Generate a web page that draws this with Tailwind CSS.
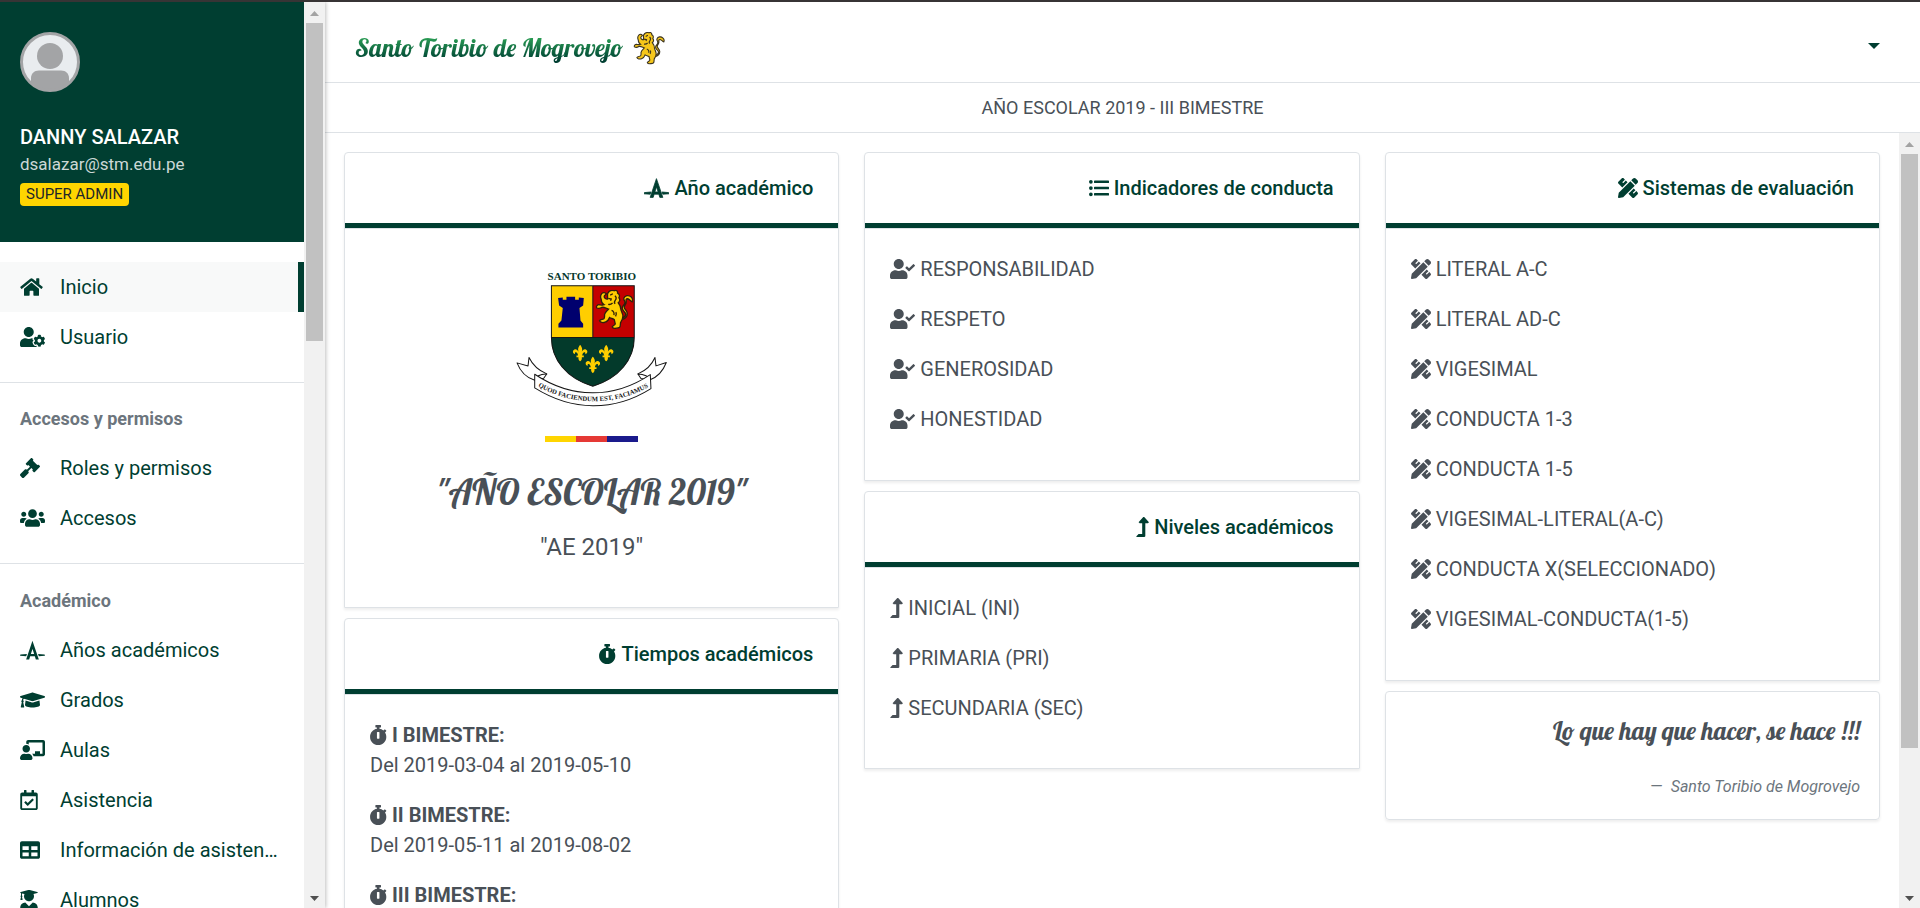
<!DOCTYPE html>
<html lang="es">
<head>
<meta charset="utf-8">
<title>Santo Toribio de Mogrovejo</title>
<script src="https://cdn.jsdelivr.net/npm/@tailwindcss/browser@4"></script>
</head>
<body class="font-['Roboto',sans-serif] text-[20px] leading-[30px] text-[#495057] bg-white">

<!-- Icon library -->
<svg class="hidden" aria-hidden="true">
  <symbol id="home" viewBox="0 0 576 512"><path d="M280.37 148.26L96 300.11V464a16 16 0 0 0 16 16l112.06-.29a16 16 0 0 0 15.92-16V368a16 16 0 0 1 16-16h64a16 16 0 0 1 16 16v95.64a16 16 0 0 0 16 16.05L464 480a16 16 0 0 0 16-16V300L295.67 148.26a12.19 12.19 0 0 0-15.3 0zM571.6 251.47L488 182.56V44.05a12 12 0 0 0-12-12h-56a12 12 0 0 0-12 12v72.61L318.47 43a48 48 0 0 0-61 0L4.34 251.47a12 12 0 0 0-1.6 16.9l25.5 31A12 12 0 0 0 45.15 301l235.22-193.74a12.19 12.19 0 0 1 15.3 0L530.9 301a12 12 0 0 0 16.9-1.6l25.5-31a12 12 0 0 0-1.7-16.93z"/></symbol>
  <symbol id="user-cog" viewBox="0 0 640 512"><path d="M610.5 373.3c2.6-14.1 2.6-28.5 0-42.6l25.8-14.9c3-1.7 4.3-5.2 3.3-8.5-6.7-21.6-18.2-41.2-33.2-57.4-2.3-2.5-6-3.1-9-1.4l-25.8 14.9c-10.9-9.3-23.4-16.5-36.9-21.3v-29.8c0-3.4-2.4-6.4-5.7-7.1-22.3-5-45-4.8-66.2 0-3.3.7-5.7 3.7-5.7 7.1v29.8c-13.5 4.8-26 12-36.9 21.3l-25.8-14.9c-2.9-1.7-6.7-1.1-9 1.4-15 16.2-26.5 35.8-33.2 57.4-1 3.3.4 6.8 3.3 8.5l25.8 14.9c-2.6 14.1-2.6 28.5 0 42.6l-25.8 14.9c-3 1.7-4.3 5.2-3.3 8.5 6.7 21.6 18.2 41.1 33.2 57.4 2.3 2.5 6 3.1 9 1.4l25.8-14.9c10.9 9.3 23.4 16.5 36.9 21.3v29.8c0 3.4 2.4 6.4 5.7 7.1 22.3 5 45 4.8 66.2 0 3.3-.7 5.7-3.7 5.7-7.1v-29.8c13.5-4.8 26-12 36.9-21.3l25.8 14.9c2.9 1.7 6.7 1.1 9-1.4 15-16.2 26.5-35.8 33.2-57.4 1-3.3-.4-6.8-3.3-8.5l-25.8-14.9zM496 400.5c-26.8 0-48.5-21.8-48.5-48.5s21.8-48.5 48.5-48.5 48.5 21.8 48.5 48.5-21.7 48.5-48.5 48.5zM224 256c70.7 0 128-57.3 128-128S294.7 0 224 0 96 57.3 96 128s57.3 128 128 128zm201.2 226.5c-2.3-1.2-4.6-2.6-6.8-3.9l-7.9 4.6c-6 3.4-12.8 5.3-19.6 5.3-10.9 0-21.4-4.6-28.9-12.6-18.3-19.8-32.3-43.9-40.2-69.6-5.5-17.7 1.9-36.4 17.9-45.7l7.9-4.6c-.1-2.6-.1-5.2 0-7.8l-7.9-4.6c-16-9.2-23.4-28-17.9-45.7.9-2.9 2.2-5.8 3.2-8.7-3.8-.3-7.5-1.2-11.4-1.2h-16.7c-22.2 10.2-46.9 16-72.9 16s-50.6-5.8-72.9-16h-16.7C60.2 288 0 348.2 0 422.4V464c0 26.5 21.5 48 48 48h352c10.1 0 19.5-3.2 27.2-8.5-1.2-3.8-2-7.7-2-11.8v-9.2z"/></symbol>
  <symbol id="gavel" viewBox="0 0 512 512"><path d="M504.971 199.362l-22.627-22.627c-9.373-9.373-24.569-9.373-33.941 0l-5.657 5.657L329.608 69.255l5.657-5.657c9.373-9.373 9.373-24.569 0-33.941L312.638 7.029c-9.373-9.373-24.569-9.373-33.941 0L154.246 131.48c-9.373 9.373-9.373 24.569 0 33.941l22.627 22.627c9.373 9.373 24.569 9.373 33.941 0l5.657-5.657 39.598 39.598-81.04 81.04-5.657-5.657c-12.497-12.497-32.758-12.497-45.255 0L9.373 412.118c-12.497 12.497-12.497 32.758 0 45.255l45.255 45.255c12.497 12.497 32.758 12.497 45.255 0l114.745-114.745c12.497-12.497 12.497-32.758 0-45.255l-5.657-5.657 81.04-81.04 39.598 39.598-5.657 5.657c-9.373 9.373-9.373 24.569 0 33.941l22.627 22.627c9.373 9.373 24.569 9.373 33.941 0l124.451-124.451c9.372-9.372 9.372-24.568 0-33.941z"/></symbol>
  <symbol id="users" viewBox="0 0 640 512"><path d="M96 224c35.3 0 64-28.7 64-64s-28.7-64-64-64-64 28.7-64 64 28.7 64 64 64zm448 0c35.3 0 64-28.7 64-64s-28.7-64-64-64-64 28.7-64 64 28.7 64 64 64zm32 32h-64c-17.6 0-33.5 7.1-45.1 18.6 40.3 22.1 68.9 62 75.1 109.4h66c17.7 0 32-14.3 32-32v-32c0-35.3-28.7-64-64-64zm-256 0c61.9 0 112-50.1 112-112S381.9 32 320 32 208 82.1 208 144s50.1 112 112 112zm76.8 32h-8.3c-20.8 10-43.9 16-68.5 16s-47.6-6-68.5-16h-8.3C179.6 288 128 339.6 128 403.2V432c0 26.5 21.5 48 48 48h288c26.5 0 48-21.5 48-48v-28.8c0-63.6-51.6-115.2-115.2-115.2zm-223.7-13.4C161.5 263.1 145.6 256 128 256H64c-35.3 0-64 28.7-64 64v32c0 17.7 14.3 32 32 32h65.9c6.3-47.4 34.9-87.3 75.2-109.4z"/></symbol>
  <symbol id="year" viewBox="0 0 640 512"><path d="M318.4 16l-161 480h77.5l25.4-81.4h119.5L405 496h77.5L318.4 16zm-40.3 341.9l41.2-130.4h1.5l40.9 130.4h-83.6zM640 405l-10-31.4L462.1 358l19.4 56.5L640 405zm-462.1-47L10 373.7 0 405l158.5 9.4 19.4-56.4z"/></symbol>
  <symbol id="cap" viewBox="0 0 640 512"><path d="M622.34 153.2L343.4 67.5c-15.2-4.67-31.6-4.67-46.79 0L17.66 153.2c-23.54 7.23-23.54 38.36 0 45.59l48.63 14.94c-10.67 13.19-17.23 29.28-17.88 46.9C38.78 266.15 32 276.11 32 288c0 10.78 5.68 19.85 13.86 25.65L20.33 428.53C18.11 438.52 25.71 448 35.94 448h56.11c10.24 0 17.84-9.48 15.62-19.47L82.14 313.65C90.32 307.85 96 298.78 96 288c0-11.57-6.47-21.25-15.66-26.87.76-15.02 8.44-28.3 20.69-36.72L296.6 284.5c9.06 2.78 26.44 6.25 46.79 0l278.95-85.7c23.55-7.24 23.55-38.36 0-45.6zM352.79 315.09c-28.53 8.76-52.84 3.92-65.59 0l-145.02-44.55L128 384c0 35.35 85.96 64 192 64s192-28.65 192-64l-14.18-113.47-145.03 44.56z"/></symbol>
  <symbol id="teacher" viewBox="0 0 640 512"><path d="M208 352c-2.39 0-4.78.35-7.06 1.09C187.98 357.3 174.35 360 160 360c-14.35 0-27.98-2.7-40.95-6.91-2.28-.74-4.66-1.09-7.05-1.09C49.94 352-.33 402.48 0 464.62.14 490.88 21.73 512 48 512h224c26.27 0 47.86-21.12 48-47.38.33-62.14-49.94-112.62-112-112.62zm-48-32c53.02 0 96-42.98 96-96s-42.98-96-96-96-96 42.98-96 96 42.98 96 96 96zM592 0H208c-26.47 0-48 22.25-48 49.59V96c23.42 0 45.1 6.78 64 17.8V64h352v288h-64v-64H384v64h-76.24c19.1 16.69 33.12 38.73 39.69 64H592c26.47 0 48-22.25 48-49.59V49.59C640 22.25 618.47 0 592 0z"/></symbol>
  <symbol id="calendar" viewBox="0 0 448 512"><path d="M400 64h-48V12c0-6.627-5.373-12-12-12h-40c-6.627 0-12 5.373-12 12v52H160V12c0-6.627-5.373-12-12-12h-40c-6.627 0-12 5.373-12 12v52H48C21.49 64 0 85.49 0 112v352c0 26.51 21.49 48 48 48h352c26.51 0 48-21.49 48-48V112c0-26.51-21.49-48-48-48zm-6 400H54a6 6 0 0 1-6-6V160h352v298a6 6 0 0 1-6 6zm-52.849-200.65L198.842 404.519c-4.705 4.667-12.303 4.637-16.971-.068l-75.091-75.699c-4.667-4.705-4.637-12.303.068-16.971l22.719-22.536c4.705-4.667 12.303-4.637 16.97.069l44.104 44.461 111.072-110.181c4.705-4.667 12.303-4.637 16.971.068l22.536 22.718c4.667 4.705 4.636 12.303-.069 16.97z"/></symbol>
  <symbol id="grid" viewBox="0 0 512 512"><path d="M464 32H48C21.49 32 0 53.49 0 80v352c0 26.51 21.49 48 48 48h416c26.51 0 48-21.49 48-48V80c0-26.51-21.49-48-48-48zM224 416H64v-96h160v96zm0-160H64v-96h160v96zm224 160H288v-96h160v96zm0-160H288v-96h160v96z"/></symbol>
  <symbol id="student" viewBox="0 0 448 512"><path d="M319.4 320.6L224 416l-95.4-95.4C57.1 323.7 0 382.2 0 454.4v9.6c0 26.5 21.5 48 48 48h352c26.5 0 48-21.5 48-48v-9.6c0-72.2-57.1-130.7-128.6-133.8zM13.6 79.8l6.4 1.5v58.4c-7 4.2-12 11.5-12 20.3 0 8.4 4.6 15.4 11.1 19.7L3.5 242c-1.7 6.9 2.1 14 7.6 14h41.8c5.5 0 9.3-7.1 7.6-14l-15.6-62.3C51.4 175.4 56 168.4 56 160c0-8.8-5-16.1-12-20.3V87.1l66 15.9c-8.6 17.2-14 36.4-14 57 0 70.7 57.3 128 128 128s128-57.3 128-128c0-20.6-5.3-39.8-14-57l96.3-23.2c18.2-4.4 18.2-27.1 0-31.5l-190.4-46c-13-3.1-26.7-3.1-39.7 0L13.6 48.2c-18.1 4.4-18.1 27.2 0 31.6z"/></symbol>
  <symbol id="list" viewBox="0 0 512 512"><path d="M48 48a48 48 0 1 0 48 48 48 48 0 0 0-48-48zm0 160a48 48 0 1 0 48 48 48 48 0 0 0-48-48zm0 160a48 48 0 1 0 48 48 48 48 0 0 0-48-48zm448 16H144a16 16 0 0 0-16 16v32a16 16 0 0 0 16 16h352a16 16 0 0 0 16-16v-32a16 16 0 0 0-16-16zm0-320H144a16 16 0 0 0-16 16v32a16 16 0 0 0 16 16h352a16 16 0 0 0 16-16V80a16 16 0 0 0-16-16zm0 160H144a16 16 0 0 0-16 16v32a16 16 0 0 0 16 16h352a16 16 0 0 0 16-16v-32a16 16 0 0 0-16-16z"/></symbol>
  <symbol id="stopwatch" viewBox="16 0 432 512"><path d="M432 304c0 114.9-93.1 208-208 208S16 418.9 16 304c0-104 76.3-190.2 176-205.5V64h-28c-6.6 0-12-5.4-12-12V12c0-6.6 5.4-12 12-12h120c6.6 0 12 5.4 12 12v40c0 6.6-5.4 12-12 12h-28v34.5c37.5 5.8 71.7 21.6 99.7 44.6l27.5-27.5c4.7-4.7 12.3-4.7 17 0l28.3 28.3c4.7 4.7 4.7 12.3 0 17l-29.4 29.4-.6.6C419.7 223.3 432 262.2 432 304zm-176 36V188.5c0-6.6-5.4-12-12-12h-40c-6.6 0-12 5.4-12 12V340c0 6.6 5.4 12 12 12h40c6.6 0 12-5.4 12-12z"/></symbol>
  <symbol id="user-check" viewBox="0 0 640 512"><path d="M224 256c70.7 0 128-57.3 128-128S294.7 0 224 0 96 57.3 96 128s57.3 128 128 128zm89.6 32h-16.7c-22.2 10.2-46.9 16-72.9 16s-50.6-5.8-72.9-16h-16.7C60.2 288 0 348.2 0 422.4V464c0 26.5 21.5 48 48 48h352c26.5 0 48-21.5 48-48v-41.6c0-74.2-60.2-134.4-134.4-134.4zm323-128.4l-27.8-28.1c-4.6-4.7-12.1-4.7-16.8-.1l-104.8 104-45.5-45.8c-4.6-4.7-12.1-4.7-16.8-.1l-28.1 27.9c-4.7 4.6-4.7 12.1-.1 16.8l81.7 82.3c4.6 4.7 12.1 4.7 16.8.1l141.3-140.2c4.6-4.7 4.7-12.2.1-16.8z"/></symbol>
  <symbol id="level-up" viewBox="0 0 320 512"><path d="M313.553 119.669L209.587 7.666c-9.485-10.214-25.676-10.229-35.174 0L70.438 119.669C56.232 134.969 67.062 160 88.025 160H152v272H68.024a11.996 11.996 0 0 0-8.485 3.515l-56 56C-4.021 499.074 1.333 512 12.024 512H208c13.255 0 24-10.745 24-24V160h63.966c20.878 0 31.851-24.969 17.587-40.331z"/></symbol>
  <symbol id="ruler" viewBox="0 0 512 512"><path d="M109.46 244.04l134.58-134.56-44.12-44.12-61.68 61.68a7.919 7.919 0 0 1-11.21 0l-11.21-11.21c-3.1-3.1-3.1-8.12 0-11.21l61.68-61.68-33.64-33.65C131.47-3.1 111.39-3.1 99 9.29L9.29 99c-12.38 12.39-12.39 32.47 0 44.86l100.17 100.18zm388.47-116.8c18.76-18.76 18.75-49.17 0-67.93l-45.25-45.25c-18.76-18.76-49.18-18.76-67.95 0l-46.02 46.01 113.2 113.2 46.02-46.03zM316.08 82.71l-297 296.96L.32 487.11c-2.53 14.49 10.09 27.11 24.59 24.56l107.45-18.84L429.28 195.9 316.08 82.71zm186.63 285.43l-33.64-33.64-61.68 61.68c-3.1 3.1-8.12 3.1-11.21 0l-11.21-11.21c-3.09-3.1-3.09-8.12 0-11.21l61.68-61.68-44.14-44.14L267.93 402.5l100.21 100.2c12.39 12.39 32.47 12.39 44.86 0l89.71-89.7c12.39-12.39 12.39-32.47 0-44.86z"/></symbol>
  <symbol id="lion" viewBox="0 0 112 120">
    <path d="M76 86c10-3 16-8 14-15-2-6-10-8-10-16 0-8 8-9 8-17 0-6-5-7-3-13 3-8 14-10 22-3 4 4 5 9 3 14-6-2-8-8-14-9-5 0-5 4-4 8 1 8-6 12-6 18 0 5 8 8 9 17 1 11-8 18-18 20z" stroke-width="4"/>
    <path d="M36 12c4-9 13-12 20-9 6-4 11 2 10 7 6 3 7 9 4 14 5 6 2 12-2 15 5 6 8 12 8 20 1 7 6 12 6 20 0 9-4 14-7 19l-1 10c0 6-6 7-11 7-6 1-12 0-13-4 3-5 8-5 9-9l-3-13c-5-3-10-3-14-6-3 8-6 12-13 14-7 3-15 1-17-4 3-5 9-3 13-6 3-3 2-8 2-13 2-7 8-11 12-16-8-2-14-8-20-5-5 3-11 4-16 1-2-6 4-10 9-9 6 1 10 2 14 0-6-3-9-9-9-16-3-6-2-13 2-18 4-4 10-3 13 1-1 4-5 4-6 8 0 5 6 9 10 8z" stroke-width="4"/>
    <path d="M44 16l8-4M38 26l9 2-2 5M58 18c5 4 4 10 1 14s-4 7 0 10M38 44c6 1 10-1 13-4M48 62c6 2 9 8 7 14M60 80c3-5 3-9 1-13" fill="none" stroke-width="4"/>
  </symbol>
  <symbol id="lis" viewBox="0 0 46 50"><path d="M23 0c7 9 8 14 3 26 3-10 9-14 14-12 7 3 6 13-2 14 2-4-1-7-4-5-4 2-4 6-5 9h5v5h-6c0 5 1 8-5 13-6-5-5-8-5-13h-6v-5h5c-1-3-1-7-5-9-3-2-6 1-4 5-8-1-9-11-2-14 5-2 11 2 14 12C15 14 16 9 23 0z"/></symbol>
</svg>

<div class="flex h-screen flex-col overflow-hidden border-t-2 border-[#373435]">
<div class="flex min-h-0 flex-1">

  <!-- Sidebar -->
  <aside class="z-10 flex w-[325px] shrink-0 bg-white shadow-[1px_0_4px_rgba(0,0,0,0.25)]">
    <div class="min-w-0 flex-1 overflow-hidden text-[#003e31]">
      <div class="h-[240px] bg-[#003e31] px-5 pt-[30px]">
        <svg class="size-[60px]" viewBox="0 0 60 60" role="img" aria-label="Avatar">
          <circle cx="30" cy="30" r="28.500" fill="#e9ecef"/>
          <circle cx="30" cy="24" r="13" fill="#a3a4a6"/>
          <path d="M11 52V46c0-4 3-7.500 8-7.500h22c5 0 8 3.500 8 7.500v6a29 29 0 0 1-38 0z" fill="#a3a4a6"/>
          <circle cx="30" cy="30" r="28.500" fill="none" stroke="#a3a4a6" stroke-width="3"/>
        </svg>
        <div class="mt-[30px] font-medium text-white">DANNY SALAZAR</div>
        <div class="text-[17px] leading-[25px] text-[#ccd8d6]">dsalazar@stm.edu.pe</div>
        <span class="mt-[6px] inline-block rounded-[4px] bg-[#ffd500] px-[6px] align-top text-[15px] leading-[23px] text-[#212529]">SUPER ADMIN</span>
      </div>
      <nav>
        <ul class="border-b border-[#dee2e6] py-5">
          <li><a href="#" class="flex h-[50px] items-center border-r-6 border-[#003e31] bg-[#f8f9f9] pl-5"><span class="w-10"><svg class="h-5 w-[23px] fill-current"><use href="#home"/></svg></span>Inicio</a></li>
          <li><a href="#" class="flex h-[50px] items-center pl-5"><span class="w-10"><svg class="h-5 w-[25px] fill-current"><use href="#user-cog"/></svg></span>Usuario</a></li>
        </ul>
        <h2 class="px-5 pt-[21px] pb-[9px] text-[18px] font-bold text-[#6c757d]">Accesos y permisos</h2>
        <ul class="border-b border-[#dee2e6] pb-5">
          <li><a href="#" class="flex h-[50px] items-center pl-5"><span class="w-10"><svg class="size-5 fill-current"><use href="#gavel"/></svg></span>Roles y permisos</a></li>
          <li><a href="#" class="flex h-[50px] items-center pl-5"><span class="w-10"><svg class="h-5 w-[25px] fill-current"><use href="#users"/></svg></span>Accesos</a></li>
        </ul>
        <h2 class="px-5 pt-[22px] pb-[9px] text-[18px] font-bold text-[#6c757d]">Académico</h2>
        <ul>
          <li><a href="#" class="flex h-[50px] items-center pl-5"><span class="w-10"><svg class="h-5 w-[25px] fill-current"><use href="#year"/></svg></span>Años académicos</a></li>
          <li><a href="#" class="flex h-[50px] items-center pl-5"><span class="w-10"><svg class="h-5 w-[25px] fill-current"><use href="#cap"/></svg></span>Grados</a></li>
          <li><a href="#" class="flex h-[50px] items-center pl-5"><span class="w-10"><svg class="h-5 w-[25px] fill-current"><use href="#teacher"/></svg></span>Aulas</a></li>
          <li><a href="#" class="flex h-[50px] items-center pl-5"><span class="w-10"><svg class="h-5 w-[18px] fill-current"><use href="#calendar"/></svg></span>Asistencia</a></li>
          <li><a href="#" class="flex h-[50px] items-center pl-5"><span class="w-10"><svg class="size-5 fill-current"><use href="#grid"/></svg></span>Información de asisten…</a></li>
          <li><a href="#" class="flex h-[50px] items-center pl-5"><span class="w-10"><svg class="h-5 w-[18px] fill-current"><use href="#student"/></svg></span>Alumnos</a></li>
        </ul>
      </nav>
    </div>
    <!-- Scrollbar -->
    <div class="flex w-[21px] flex-col items-center bg-[#f1f1f1]" aria-hidden="true">
      <svg class="h-[21px] w-[21px] shrink-0" viewBox="0 0 21 21"><path d="M6 14l4.500-5 4.500 5z" fill="#a3a3a3"/></svg>
      <div class="h-[318px] w-[17px] bg-[#c1c1c1]"></div>
      <svg class="mt-auto h-[21px] w-[21px] shrink-0" viewBox="0 0 21 21"><path d="M6 9l4.500 5 4.500-5z" fill="#505050"/></svg>
    </div>
  </aside>

  <!-- Main -->
  <div class="flex min-w-0 flex-1 flex-col">
    <header class="flex h-[81px] shrink-0 items-center justify-between border-b border-[#dee2e6] pt-3 pr-[40px] pl-[30px]">
      <a href="#" class="flex items-center gap-[10px]">
        <span class="bg-linear-to-b from-[#34b35a] from-10% to-[#003e31] to-85% bg-clip-text font-['Lobster','Liberation_Serif',serif] text-[25px] leading-[38px] text-transparent">Santo Toribio de Mogrovejo</span>
        <svg class="h-[33px] w-8 fill-[#f6c71b] stroke-[#3a3320]"><use href="#lion"/></svg>
      </a>
      <button type="button" aria-label="Menú de usuario" class="pb-1"><svg class="h-[6px] w-3 fill-[#003e31]" viewBox="0 0 12 6"><path d="M0 0h12L6 6z"/></svg></button>
    </header>
    <div class="flex h-[50px] shrink-0 items-center justify-center border-b border-[#dee2e6] text-[18px]">AÑO ESCOLAR 2019 - III BIMESTRE</div>

    <div class="flex min-h-0 flex-1">
      <main class="grid min-w-0 flex-1 grid-cols-3 items-start gap-[25px] overflow-hidden px-[19px] pt-[19px]">

        <div class="flex flex-col gap-[10px]">
          <section class="rounded-t-[4px] border border-[#dee2e6] shadow-[0_2px_3px_rgba(0,0,0,0.07)]">
            <h3 class="flex h-[75px] items-center justify-end gap-[5px] border-b-5 border-[#003e31] px-[25px] font-medium text-[#003e31]"><svg class="h-5 w-[25px] fill-current stroke-current [stroke-width:20]"><use href="#year"/></svg>Año académico</h3>
            <div class="flex flex-col items-center border-t border-[#dee2e6] pt-[41px] pb-[41px]">
              <svg class="h-[137px] w-[151px]" viewBox="80 60 452 410" role="img" aria-label="Escudo Santo Toribio">
                <text x="307" y="90" text-anchor="middle" font-family="Liberation Serif, serif" font-weight="bold" font-size="33" fill="#06382c">SANTO TORIBIO</text>
                <path d="M186 107h124v155H186z" fill="#ffce00"/>
                <path d="M310 107h124v155H310z" fill="#c40000"/>
                <path d="M186 262h248c1 65-45 122-124 146-80-24-125-81-124-146z" fill="#033a2b"/>
                <path d="M186 107h248v155c0 65-45 122-124 146-80-24-124-81-124-146zM310 107v155M186 262h248" fill="none" stroke="#161616" stroke-width="3"/>
                <path d="M206 144l14-2v7h11v-9h26v9h11v-7l15 2-2 22-11 8 3 37 8 10v11h-74v-11l9-10 4-37-11-8z" fill="#00006e"/>
                <use href="#lion" x="318" y="119" width="112" height="120" fill="#ffce00" stroke="#30200a"/>
                <use href="#lis" x="249" y="284" width="46" height="50" fill="#ffce00"/>
                <use href="#lis" x="327" y="284" width="46" height="50" fill="#ffce00"/>
                <use href="#lis" x="287" y="319" width="46" height="50" fill="#ffce00"/>
                <g fill="#fff" stroke="#161616" stroke-width="3" stroke-linejoin="round">
                  <path d="M172 371c-24-10-42-26-53-49l-3 25-33-9c9 23 26 44 53 52z"/>
                  <path d="M445 371c24-10 41-26 51-49l3 25 31-10c-9 23-26 44-50 52z"/>
                  <path d="M136 390c2-10 16-20 36-19l-9 13z"/>
                  <path d="M482 389c-4-9-18-18-37-18l9 14z"/>
                  <path d="M136 372c110 73 234 75 346 1l2 42c-112 70-236 68-348-2z"/>
                </g>
                <path id="motto" d="M142 406c102 62 236 62 338 2" fill="none"/>
                <text font-family="Liberation Serif, serif" font-weight="bold" font-size="20" fill="#161616"><textPath href="#motto" startOffset="50%" text-anchor="middle">QUOD FACIENDUM EST, FACIAMUS</textPath></text>
              </svg>
              <div class="mt-[29px] flex h-[6px] w-[93px]" aria-hidden="true"><span class="flex-1 bg-[#ffd500]"></span><span class="flex-1 bg-[#e53935]"></span><span class="flex-1 bg-[#1a1a8c]"></span></div>
              <h1 class="mt-5 font-['Lobster','Liberation_Serif',serif] text-[35px] leading-[60px]">"AÑO ESCOLAR 2019"</h1>
              <p class="mt-[6px] text-[24px] leading-[38px]">"AE 2019"</p>
            </div>
          </section>

          <section class="rounded-t-[4px] border border-[#dee2e6] shadow-[0_2px_3px_rgba(0,0,0,0.07)]">
            <h3 class="flex h-[75px] items-center justify-end gap-[5px] border-b-5 border-[#003e31] px-[25px] font-medium text-[#003e31]"><svg class="h-5 w-[17px] fill-current"><use href="#stopwatch"/></svg>Tiempos académicos</h3>
            <ul class="flex flex-col gap-5 border-t border-[#dee2e6] px-[25px] pt-[25px] pb-[46px]">
              <li><strong class="flex items-center gap-[5px]"><svg class="h-5 w-[17px] fill-current"><use href="#stopwatch"/></svg>I BIMESTRE:</strong>Del 2019-03-04 al 2019-05-10</li>
              <li><strong class="flex items-center gap-[5px]"><svg class="h-5 w-[17px] fill-current"><use href="#stopwatch"/></svg>II BIMESTRE:</strong>Del 2019-05-11 al 2019-08-02</li>
              <li><strong class="flex items-center gap-[5px]"><svg class="h-5 w-[17px] fill-current"><use href="#stopwatch"/></svg>III BIMESTRE:</strong></li>
            </ul>
          </section>
        </div>

        <div class="flex flex-col gap-[10px]">
          <section class="rounded-t-[4px] border border-[#dee2e6] shadow-[0_2px_3px_rgba(0,0,0,0.07)]">
            <h3 class="flex h-[75px] items-center justify-end gap-[5px] border-b-5 border-[#003e31] px-[25px] font-medium text-[#003e31]"><svg class="size-5 fill-current"><use href="#list"/></svg>Indicadores de conducta</h3>
            <ul class="flex flex-col gap-5 border-t border-[#dee2e6] px-[25px] pt-[25px] pb-[46px]">
              <li class="flex items-center gap-[5px]"><svg class="h-5 w-[25px] fill-current"><use href="#user-check"/></svg>RESPONSABILIDAD</li>
              <li class="flex items-center gap-[5px]"><svg class="h-5 w-[25px] fill-current"><use href="#user-check"/></svg>RESPETO</li>
              <li class="flex items-center gap-[5px]"><svg class="h-5 w-[25px] fill-current"><use href="#user-check"/></svg>GENEROSIDAD</li>
              <li class="flex items-center gap-[5px]"><svg class="h-5 w-[25px] fill-current"><use href="#user-check"/></svg>HONESTIDAD</li>
            </ul>
          </section>

          <section class="rounded-t-[4px] border border-[#dee2e6] shadow-[0_2px_3px_rgba(0,0,0,0.07)]">
            <h3 class="flex h-[75px] items-center justify-end gap-[5px] border-b-5 border-[#003e31] px-[25px] font-medium text-[#003e31]"><svg class="h-5 w-[13px] fill-current"><use href="#level-up"/></svg>Niveles académicos</h3>
            <ul class="flex flex-col gap-5 border-t border-[#dee2e6] px-[25px] pt-[25px] pb-[45px]">
              <li class="flex items-center gap-[5px]"><svg class="h-5 w-[13px] fill-current"><use href="#level-up"/></svg>INICIAL (INI)</li>
              <li class="flex items-center gap-[5px]"><svg class="h-5 w-[13px] fill-current"><use href="#level-up"/></svg>PRIMARIA (PRI)</li>
              <li class="flex items-center gap-[5px]"><svg class="h-5 w-[13px] fill-current"><use href="#level-up"/></svg>SECUNDARIA (SEC)</li>
            </ul>
          </section>
        </div>

        <div class="flex flex-col gap-[10px]">
          <section class="rounded-t-[4px] border border-[#dee2e6] shadow-[0_2px_3px_rgba(0,0,0,0.07)]">
            <h3 class="flex h-[75px] items-center justify-end gap-[5px] border-b-5 border-[#003e31] px-[25px] font-medium text-[#003e31]"><svg class="size-5 fill-current"><use href="#ruler"/></svg>Sistemas de evaluación</h3>
            <ul class="flex flex-col gap-5 border-t border-[#dee2e6] px-[25px] pt-[25px] pb-[46px]">
              <li class="flex items-center gap-[5px]"><svg class="size-5 fill-current"><use href="#ruler"/></svg>LITERAL A-C</li>
              <li class="flex items-center gap-[5px]"><svg class="size-5 fill-current"><use href="#ruler"/></svg>LITERAL AD-C</li>
              <li class="flex items-center gap-[5px]"><svg class="size-5 fill-current"><use href="#ruler"/></svg>VIGESIMAL</li>
              <li class="flex items-center gap-[5px]"><svg class="size-5 fill-current"><use href="#ruler"/></svg>CONDUCTA 1-3</li>
              <li class="flex items-center gap-[5px]"><svg class="size-5 fill-current"><use href="#ruler"/></svg>CONDUCTA 1-5</li>
              <li class="flex items-center gap-[5px]"><svg class="size-5 fill-current"><use href="#ruler"/></svg>VIGESIMAL-LITERAL(A-C)</li>
              <li class="flex items-center gap-[5px]"><svg class="size-5 fill-current"><use href="#ruler"/></svg>CONDUCTA X(SELECCIONADO)</li>
              <li class="flex items-center gap-[5px]"><svg class="size-5 fill-current"><use href="#ruler"/></svg>VIGESIMAL-CONDUCTA(1-5)</li>
            </ul>
          </section>

          <blockquote class="rounded-[4px] border border-[#dee2e6] px-[19px] py-5 text-right shadow-[0_2px_3px_rgba(0,0,0,0.07)]">
            <p class="font-['Lobster','Liberation_Serif',serif] text-[25px] leading-[38px]">Lo que hay que hacer, se hace !!!</p>
            <footer class="mt-6 text-[16px] leading-[25px] text-[#6c757d]">—&nbsp; <cite>Santo Toribio de Mogrovejo</cite></footer>
          </blockquote>
        </div>
      </main>
      <!-- Scrollbar -->
      <div class="flex w-[21px] flex-col items-center bg-[#f1f1f1]" aria-hidden="true">
        <svg class="h-[21px] w-[21px] shrink-0" viewBox="0 0 21 21"><path d="M6 14l4.500-5 4.500 5z" fill="#a3a3a3"/></svg>
        <div class="h-[594px] w-[17px] bg-[#c1c1c1]"></div>
        <svg class="mt-auto h-[21px] w-[21px] shrink-0" viewBox="0 0 21 21"><path d="M6 9l4.500 5 4.500-5z" fill="#505050"/></svg>
      </div>
    </div>
  </div>
</div>
</div>
</body>
</html>
